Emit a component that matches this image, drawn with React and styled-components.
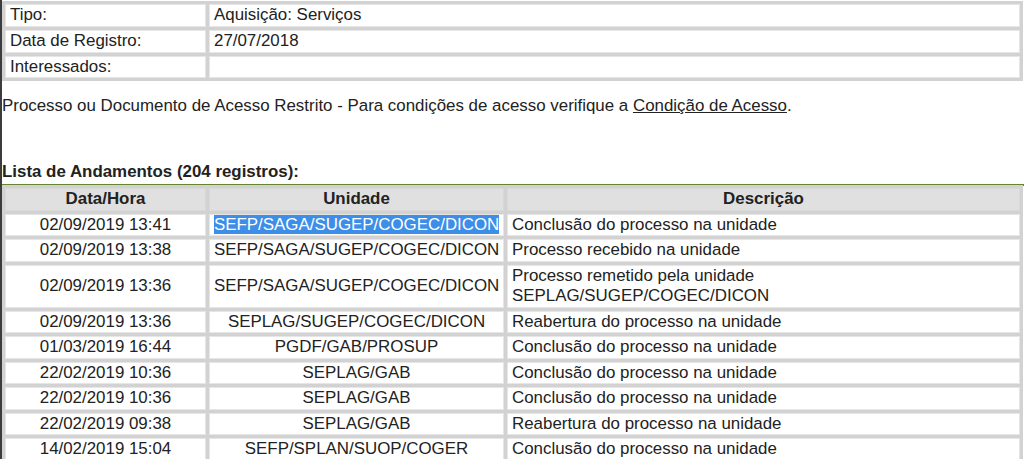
import React from "react";
import styled, { createGlobalStyle } from "styled-components";

const GlobalStyle = createGlobalStyle`
  html, body {
    margin: 0;
    padding: 0;
    background: #ffffff;
  }
  body {
    font-family: "Liberation Sans", Arial, sans-serif;
    font-size: 16.9px;
    color: #222;
  }
`;

const andamentos = [
  { data: "02/09/2019 13:41", unidade: "SEFP/SAGA/SUGEP/COGEC/DICON", descricao: ["Conclusão do processo na unidade"], selected: true },
  { data: "02/09/2019 13:38", unidade: "SEFP/SAGA/SUGEP/COGEC/DICON", descricao: ["Processo recebido na unidade"] },
  { data: "02/09/2019 13:36", unidade: "SEFP/SAGA/SUGEP/COGEC/DICON", descricao: ["Processo remetido pela unidade", "SEPLAG/SUGEP/COGEC/DICON"] },
  { data: "02/09/2019 13:36", unidade: "SEPLAG/SUGEP/COGEC/DICON", descricao: ["Reabertura do processo na unidade"] },
  { data: "01/03/2019 16:44", unidade: "PGDF/GAB/PROSUP", descricao: ["Conclusão do processo na unidade"] },
  { data: "22/02/2019 10:36", unidade: "SEPLAG/GAB", descricao: ["Conclusão do processo na unidade"] },
  { data: "22/02/2019 10:36", unidade: "SEPLAG/GAB", descricao: ["Conclusão do processo na unidade"] },
  { data: "22/02/2019 09:38", unidade: "SEPLAG/GAB", descricao: ["Reabertura do processo na unidade"] },
  { data: "14/02/2019 15:04", unidade: "SEFP/SPLAN/SUOP/COGER", descricao: ["Conclusão do processo na unidade"] },
];

const App = () => {
  return (
    <Page>
      <GlobalStyle />
      <InfoTable>
        <tbody>
          <tr>
            <InfoLabel>Tipo:</InfoLabel>
            <InfoValue>Aquisição: Serviços</InfoValue>
          </tr>
          <tr>
            <InfoLabel>Data de Registro:</InfoLabel>
            <InfoValue>27/07/2018</InfoValue>
          </tr>
          <tr>
            <InfoLabel>Interessados:</InfoLabel>
            <InfoValue></InfoValue>
          </tr>
        </tbody>
      </InfoTable>

      <Notice>
        Processo ou Documento de Acesso Restrito - Para condições de acesso verifique a{" "}
        <NoticeLink href="#">Condição de Acesso</NoticeLink>.
      </Notice>

      <ListTitle>Lista de Andamentos (204 registros):</ListTitle>

      <ListTable>
        <colgroup>
          <col style={{ width: 201 }} />
          <col style={{ width: 295 }} />
          <col />
        </colgroup>
        <thead>
          <tr>
            <HeadCell>Data/Hora</HeadCell>
            <HeadCell>Unidade</HeadCell>
            <HeadCell>Descrição</HeadCell>
          </tr>
        </thead>
        <tbody>
          {andamentos.map((a, i) => (
            <tr key={i}>
              <Cell $center>{a.data}</Cell>
              <Cell $center>
                {a.selected ? <Selected>{a.unidade}</Selected> : a.unidade}
              </Cell>
              <Cell>
                {a.descricao.map((line, j) => (
                  <React.Fragment key={j}>
                    {j > 0 && <br />}
                    {line}
                  </React.Fragment>
                ))}
              </Cell>
            </tr>
          ))}
        </tbody>
      </ListTable>
    </Page>
  );
};

const Page = styled.div`
  min-height: 459px;
  border-left: 2px solid #3c3c3c;
  box-sizing: border-box;
  overflow: hidden;
`;

const InfoTable = styled.table`
  width: 1021px;
  border-collapse: separate;
  border-spacing: 3px;
  background: #d2d2d2;
  margin-top: 1px;
`;

const InfoLabel = styled.td`
  width: 191px;
  background: #fff;
  border: 1px solid #e6e6e6;
  padding: 0 4px;
  line-height: 20.8px;
`;

const InfoValue = styled.td`
  background: #fff;
  border: 1px solid #e6e6e6;
  padding: 0 4px;
  line-height: 20.8px;
`;

const Notice = styled.p`
  margin: 15px 0 0 0;
  line-height: 20.8px;
`;

const NoticeLink = styled.a`
  color: #222;
  text-decoration: underline;
`;

const ListTitle = styled.div`
  margin-top: 45px;
  font-weight: bold;
  line-height: 20.8px;
  border-bottom: 2px solid #66852f;
  padding-bottom: 1px;
`;

const ListTable = styled.table`
  width: 1021px;
  border-collapse: separate;
  border-spacing: 3px;
  background: #d2d2d2;
  table-layout: fixed;
  margin-top: -1px;
`;

const HeadCell = styled.th`
  background: #e0e0e0;
  border: 1px solid #d8d8d8;
  font-weight: bold;
  text-align: center;
  line-height: 20.8px;
  padding: 0 4px;
`;

const Cell = styled.td`
  background: #fff;
  border: 1px solid #e6e6e6;
  text-align: ${(p) => (p.$center ? "center" : "left")};
  vertical-align: middle;
  line-height: 20.5px;
  padding: 0 4px;
  white-space: nowrap;
`;

const Selected = styled.span`
  background: #3d8ee8;
  color: #fff;
`;

export default App;
